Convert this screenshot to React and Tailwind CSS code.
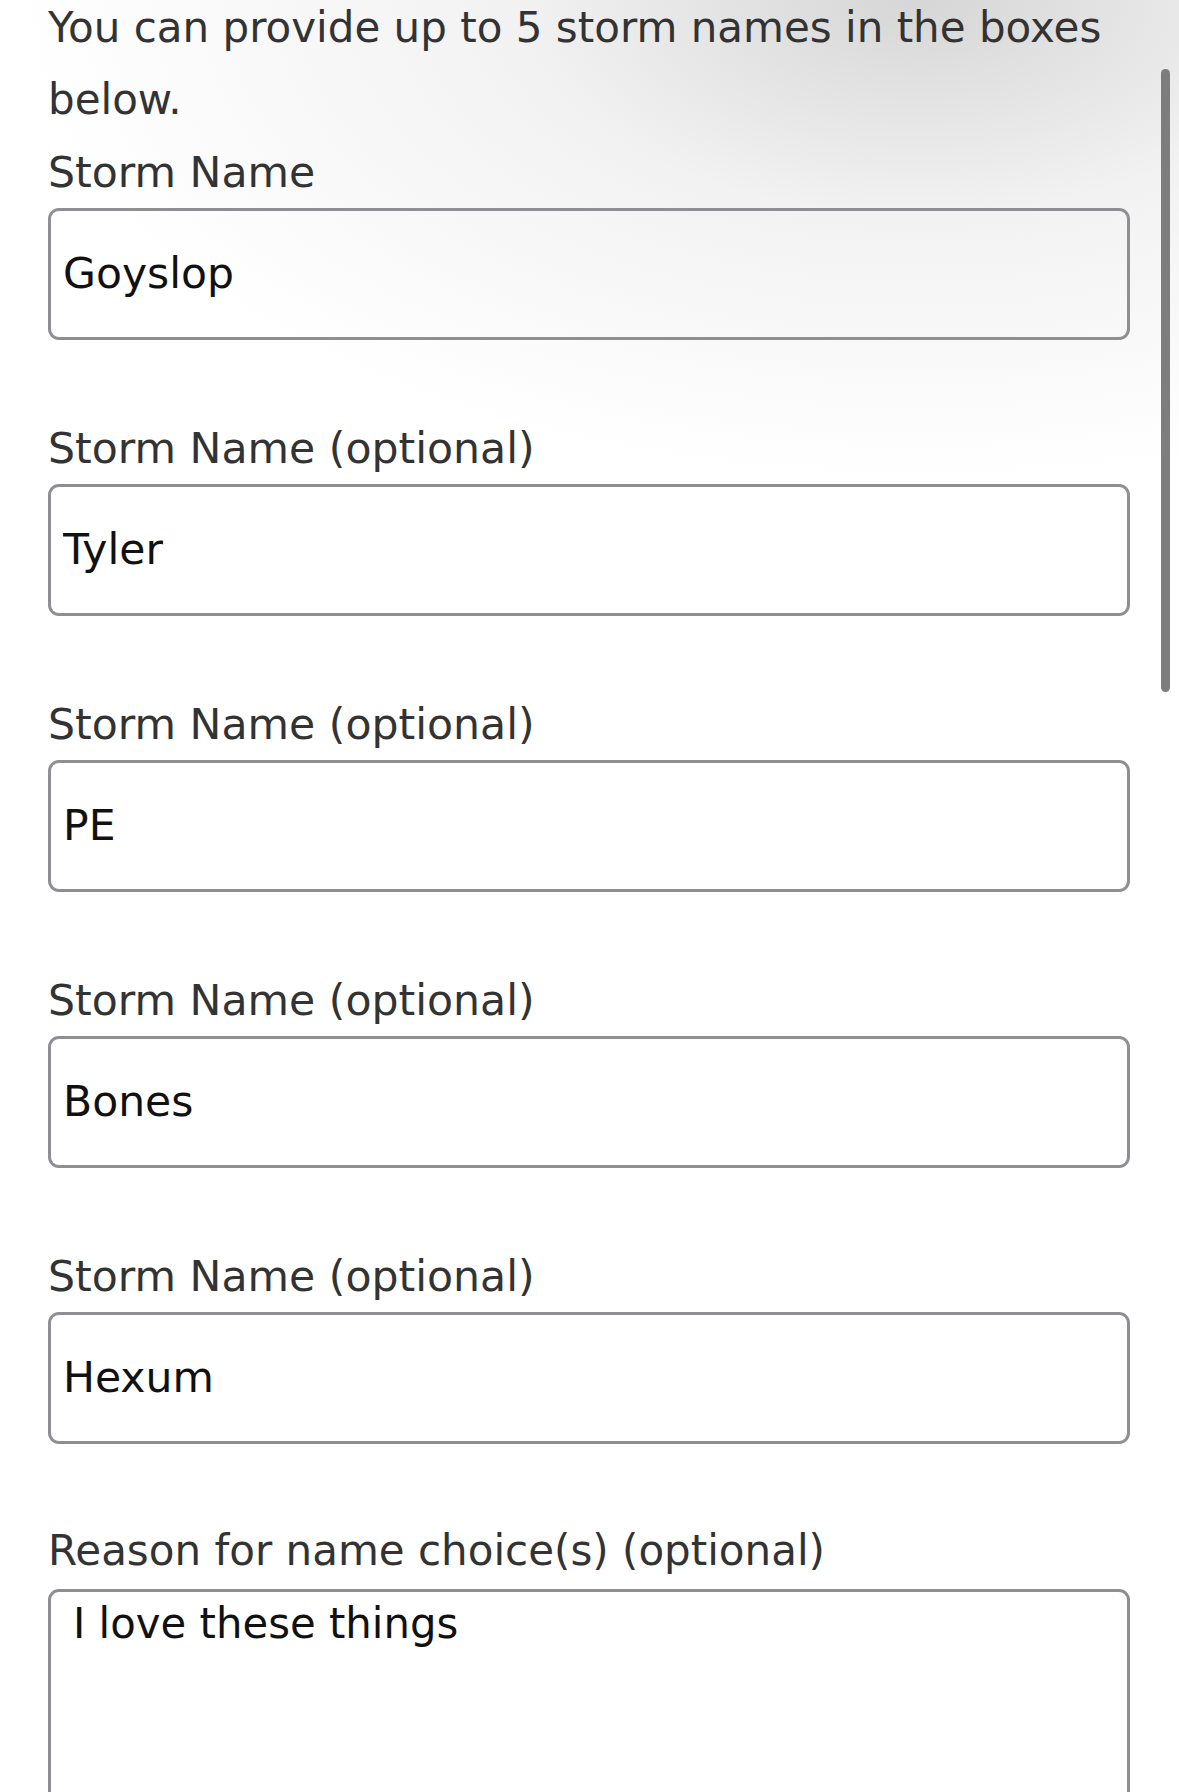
import React from "react";

const names = [
  { label: "Storm Name", value: "Goyslop" },
  { label: "Storm Name (optional)", value: "Tyler" },
  { label: "Storm Name (optional)", value: "PE" },
  { label: "Storm Name (optional)", value: "Bones" },
  { label: "Storm Name (optional)", value: "Hexum" },
];

function Field({ label, value }) {
  return (
    <div className="mb-[72px]">
      <label className="block text-[42.6px] leading-[72px] text-[#333333]">{label}</label>
      <input
        readOnly
        value={value}
        className="block w-full h-[132px] border-[3px] border-[#8e8e93] rounded-[11px] bg-transparent pl-[12px] pb-[2px] text-[42.5px] text-[#111111] outline-none"
        style={{ fontFamily: "'DejaVu Sans', sans-serif" }}
      />
    </div>
  );
}

export default function App() {
  return (
    <div
      className="relative h-[1792px] overflow-hidden bg-[radial-gradient(ellipse_900px_480px_at_78%_0%,#d6d6d6_0%,#f2f2f2_45%,#ffffff_100%)]"
      style={{ fontFamily: "'DejaVu Sans', sans-serif" }}
    >
      <div className="pl-[48px] w-[1130px]">
        <p className="-mt-[8px] text-[42px] leading-[72px] text-[#333333]">
          You can provide up to 5 storm names in the boxes below.
        </p>
        {names.map((n, i) => (
          <Field key={i} label={n.label} value={n.value} />
        ))}
        <label className="block -mt-[1px] text-[42px] leading-[72px] text-[#333333]">
          Reason for name choice(s) (optional)
        </label>
        <textarea
          readOnly
          value="I love these things"
          className="block w-full h-[300px] mt-[2px] border-[3px] border-[#8e8e93] rounded-[11px] bg-white pl-[22px] pt-[7px] text-[41.8px] leading-[1.2] text-[#111111] outline-none resize-none"
          style={{ fontFamily: "'DejaVu Sans', sans-serif" }}
        />
      </div>
      <div className="absolute left-[1161px] top-[69px] w-[9px] h-[623px] rounded-full bg-[#7d7d7d]" />
    </div>
  );
}
